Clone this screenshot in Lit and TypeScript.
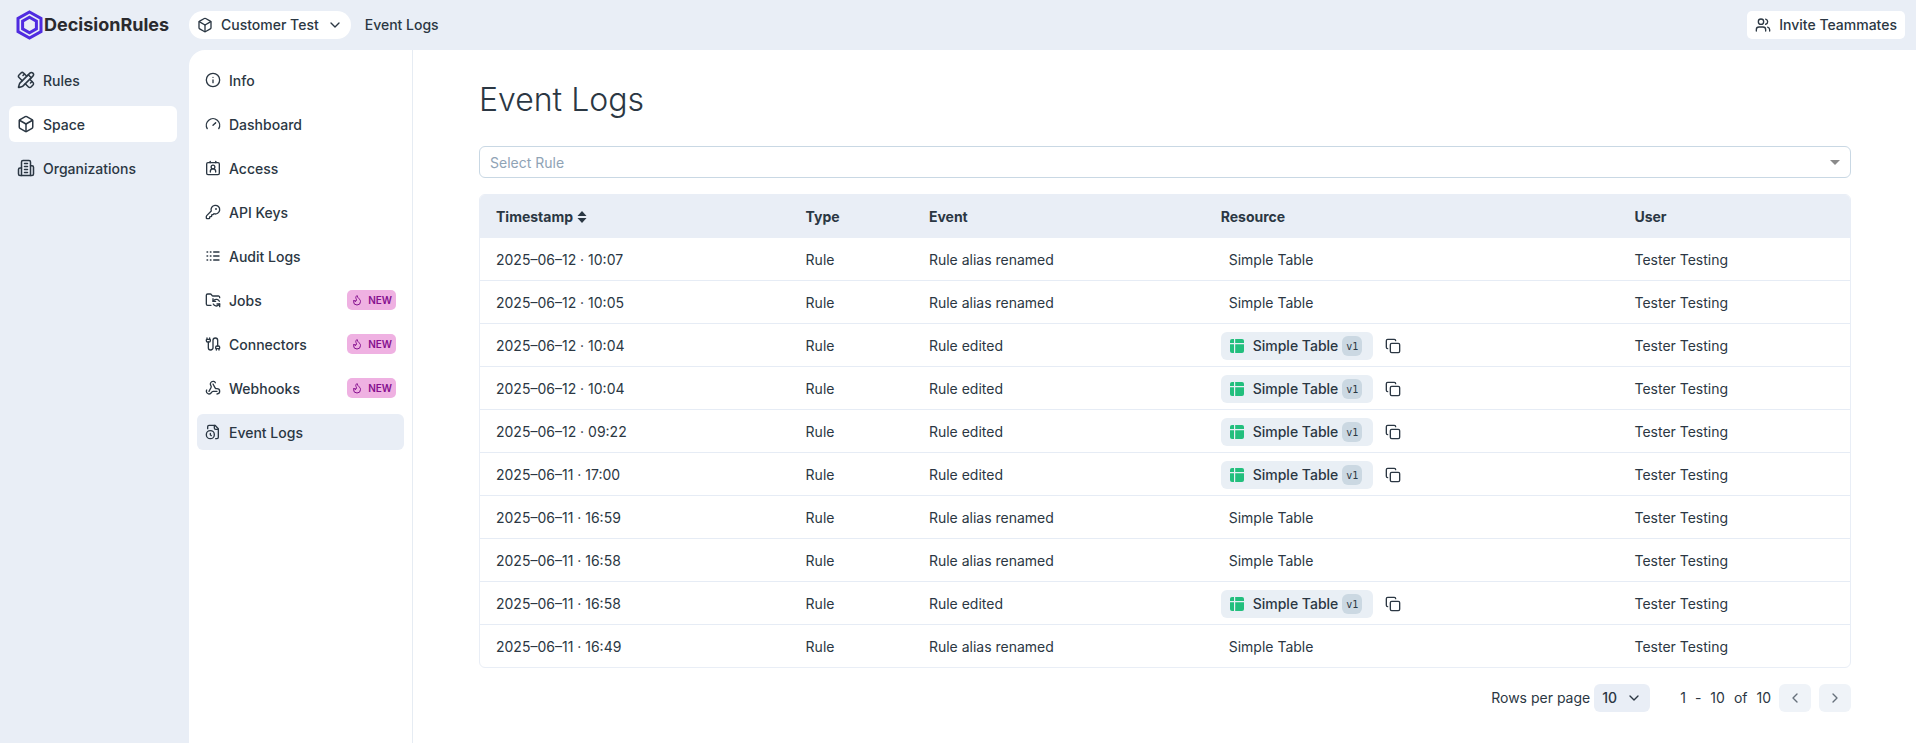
import { LitElement, html, css, svg, nothing } from "lit";
import { customElement, state } from "lit/decorators.js";
import { classMap } from "lit/directives/class-map.js";

const ICONS = {
  box: svg`<path d="M21 8a2 2 0 0 0-1-1.73l-7-4a2 2 0 0 0-2 0l-7 4A2 2 0 0 0 3 8v8a2 2 0 0 0 1 1.73l7 4a2 2 0 0 0 2 0l7-4A2 2 0 0 0 21 16Z"/><path d="m3.3 7 8.7 5 8.7-5"/><path d="M12 22V12"/>`,
  rules: svg`<path d="M13 7 8.7 2.7a2.41 2.41 0 0 0-3.4 0L2.7 5.3a2.41 2.41 0 0 0 0 3.4L7 13"/><path d="m8 6 2-2"/><path d="m18 16 2-2"/><path d="m17 11 4.3 4.3c.94.94.94 2.46 0 3.4l-2.6 2.6c-.94.94-2.46.94-3.4 0L11 17"/><path d="M21.174 6.812a1 1 0 0 0-3.986-3.987L3.842 16.174a2 2 0 0 0-.5.83l-1.321 4.352a.5.5 0 0 0 .623.622l4.353-1.32a2 2 0 0 0 .83-.497z"/><path d="m15 5 4 4"/>`,
  building: svg`<path d="M6 22V4a2 2 0 0 1 2-2h8a2 2 0 0 1 2 2v18Z"/><path d="M6 12H4a2 2 0 0 0-2 2v6a2 2 0 0 0 2 2h2"/><path d="M18 9h2a2 2 0 0 1 2 2v9a2 2 0 0 1-2 2h-2"/><path d="M10 6h4"/><path d="M10 10h4"/><path d="M10 14h4"/><path d="M10 18h4"/>`,
  info: svg`<circle cx="12" cy="12" r="10"/><path d="M12 16v-4"/><path d="M12 8h.01"/>`,
  gauge: svg`<path d="m12 14 4-4"/><path d="M3.34 19a10 10 0 1 1 17.32 0"/>`,
  access: svg`<path d="M16 2v2"/><path d="M8 2v2"/><rect x="2.5" y="4" width="19" height="18" rx="2"/><circle cx="12" cy="10.5" r="2.8"/><path d="M8 18v-1.2a4 3.5 0 0 1 8 0V18"/>`,
  key: svg`<path d="M2.586 17.414A2 2 0 0 0 2 18.828V21a1 1 0 0 0 1 1h3a1 1 0 0 0 1-1v-1a1 1 0 0 1 1-1h1a1 1 0 0 0 1-1v-1a1 1 0 0 1 1-1h.172a2 2 0 0 0 1.414-.586l.814-.814a6.5 6.5 0 1 0-4-4z"/><circle cx="16.5" cy="7.5" r=".5" fill="currentColor"/>`,
  logs: svg`<path d="M13 12h8"/><path d="M13 18h8"/><path d="M13 6h8"/><path d="M3 12h1"/><path d="M3 18h1"/><path d="M3 6h1"/><path d="M8 12h1"/><path d="M8 18h1"/><path d="M8 6h1"/>`,
  folderSync: svg`<path d="M9 20H4a2 2 0 0 1-2-2V5a2 2 0 0 1 2-2h3.9a2 2 0 0 1 1.69.9l.81 1.2a2 2 0 0 0 1.67.9H20a2 2 0 0 1 2 2v.5"/><path d="M12 10v4h4"/><path d="m12 14 1.535-1.605a5 5 0 0 1 8 1.5"/><path d="M22 22v-4h-4"/><path d="m22 18-1.535 1.605a5 5 0 0 1-8-1.5"/>`,
  cable: svg`<path d="M17 21v-2a1 1 0 0 1-1-1v-1a2 2 0 0 1 2-2h2a2 2 0 0 1 2 2v1a1 1 0 0 1-1 1v2"/><path d="M19 15V6.5a3.5 3.5 0 0 0-7 0v11a3.5 3.5 0 0 1-7 0V9"/><path d="M21 19h-4"/><path d="M3 5h4V3"/><path d="M7 5a1 1 0 0 1 1 1v1a2 2 0 0 1-2 2H4a2 2 0 0 1-2-2V6a1 1 0 0 1 1-1V3"/>`,
  webhook: svg`<path d="M18 16.98h-5.99c-1.1 0-1.95.94-2.48 1.9A4 4 0 0 1 2 17c.01-.7.2-1.4.57-2"/><path d="m6 17 3.13-5.78c.53-.97.1-2.18-.5-3.1a4 4 0 1 1 6.89-4.06"/><path d="m12 6 3.13 5.73C15.66 12.7 16.9 13 18 13a4 4 0 0 1 0 8"/>`,
  fileClock: svg`<path d="M16 22h2a2 2 0 0 0 2-2V7l-5-5H6a2 2 0 0 0-2 2v3"/><path d="M14 2v4a2 2 0 0 0 2 2h4"/><circle cx="8" cy="16" r="6"/><path d="M9.5 17.5 8 16.25V14"/>`,
  flame: svg`<path d="M8.5 14.5A2.5 2.5 0 0 0 11 12c0-1.38-.5-2-1-3-1.072-2.143-.224-4.054 2-6 .5 2.5 2 4.9 4 6.5 2 1.6 3 3.5 3 5.5a7 7 0 1 1-14 0c0-1.153.433-2.294 1-3a2.5 2.5 0 0 0 2.5 2.5z"/>`,
  users: svg`<path d="M16 21v-2a4 4 0 0 0-4-4H6a4 4 0 0 0-4 4v2"/><circle cx="9" cy="7" r="4"/><path d="M22 21v-2a4 4 0 0 0-3-3.87"/><path d="M16 3.13a4 4 0 0 1 0 7.75"/>`,
  copy: svg`<rect x="8" y="8" width="14" height="14" rx="2"/><path d="M4 16c-1.1 0-2-.9-2-2V4c0-1.1.9-2 2-2h10c1.1 0 2 .9 2 2"/>`,
  down: svg`<path d="m6 9 6 6 6-6"/>`,
  left: svg`<path d="m15 18-6-6 6-6"/>`,
  right: svg`<path d="m9 18 6-6-6-6"/>`,
};
type IconName = keyof typeof ICONS;

const icon = (name: IconName, cls = "icon") =>
  html`<svg class=${cls} viewBox="0 0 24 24" aria-hidden="true">${ICONS[name]}</svg>`;

interface NavItem { label: string; icon: IconName; active?: boolean; isNew?: boolean; }

const MAIN_NAV: NavItem[] = [
  { label: "Rules", icon: "rules" },
  { label: "Space", icon: "box", active: true },
  { label: "Organizations", icon: "building" },
];

const SPACE_NAV: NavItem[] = [
  { label: "Info", icon: "info" },
  { label: "Dashboard", icon: "gauge" },
  { label: "Access", icon: "access" },
  { label: "API Keys", icon: "key" },
  { label: "Audit Logs", icon: "logs" },
  { label: "Jobs", icon: "folderSync", isNew: true },
  { label: "Connectors", icon: "cable", isNew: true },
  { label: "Webhooks", icon: "webhook", isNew: true },
  { label: "Event Logs", icon: "fileClock", active: true },
];

interface LogRow { time: string; event: string; version?: string; }

const RENAMED = "Rule alias renamed";
const EDITED = "Rule edited";
const ROWS: LogRow[] = [
  { time: "2025–06–12 · 10:07", event: RENAMED },
  { time: "2025–06–12 · 10:05", event: RENAMED },
  { time: "2025–06–12 · 10:04", event: EDITED, version: "v1" },
  { time: "2025–06–12 · 10:04", event: EDITED, version: "v1" },
  { time: "2025–06–12 · 09:22", event: EDITED, version: "v1" },
  { time: "2025–06–11 · 17:00", event: EDITED, version: "v1" },
  { time: "2025–06–11 · 16:59", event: RENAMED },
  { time: "2025–06–11 · 16:58", event: RENAMED },
  { time: "2025–06–11 · 16:58", event: EDITED, version: "v1" },
  { time: "2025–06–11 · 16:49", event: RENAMED },
];

@customElement("app-root")
export class AppRoot extends LitElement {
  @state() private ascending = false;

  static styles = css`
    :host {
      --surface: #e9eef6;
      --ink: #2b3743;
      display: flex;
      flex-direction: column;
      min-height: 100vh;
      background: var(--surface);
      color: var(--ink);
      font: 400 14px/20px Inter, "Liberation Sans", sans-serif;
    }
    * { box-sizing: border-box; }
    button, select { font: inherit; color: inherit; border: 0; margin: 0; cursor: pointer; }
    a { color: inherit; text-decoration: none; }
    svg { display: block; flex: none; }
    .icon, .icon-lg, .icon-sm {
      width: 16px;
      height: 16px;
      fill: none;
      stroke: currentColor;
      stroke-width: 2;
      stroke-linecap: round;
      stroke-linejoin: round;
    }
    .icon-lg { width: 18px; height: 18px; }
    .icon-sm { width: 12px; height: 12px; }

    header { display: flex; align-items: center; height: 50px; padding-right: 11px; font-weight: 500; }
    .brand {
      display: flex;
      align-items: center;
      gap: 1px;
      width: 189px;
      padding-left: 16px;
      font-size: 18px;
      font-weight: 700;
      color: #2a2a2e;
    }
    .brand svg { width: 27px; height: 30px; }
    .space-switch, .invite {
      display: flex;
      align-items: center;
      gap: 8px;
      height: 28px;
      padding: 0 8px;
      background: #fff;
      border-radius: 14px;
    }
    .invite { margin-left: auto; border-radius: 5px; }
    .crumb { padding-left: 14px; }

    .body { display: flex; flex: 1; }
    .main-nav { width: 189px; padding: 12px 12px 12px 9px; }
    .space-nav {
      width: 224px;
      padding: 12px 8px;
      background: #fff;
      border-right: 1px solid #e6ecf3;
      border-top-left-radius: 16px;
    }
    .nav-list { display: flex; flex-direction: column; gap: 8px; margin: 0; padding: 0; list-style: none; }
    .nav-link {
      display: flex;
      align-items: center;
      gap: 8px;
      height: 36px;
      padding: 0 8px;
      border-radius: 6px;
      font-weight: 500;
    }
    .label { padding-top: 2px; }
    .main-nav .active { background: #fff; }
    .space-nav .active { background: var(--surface); }
    .new {
      display: flex;
      align-items: center;
      gap: 5px;
      height: 20px;
      margin-left: auto;
      padding: 0 4px;
      border-radius: 5px;
      background: #efb1e2;
      color: #86108f;
      font-size: 10px;
      font-weight: 600;
    }

    main { flex: 1; min-width: 0; padding: 30px 65px 30px 66px; background: #fff; }
    h1 { margin: 0 0 26px; font-size: 32px; line-height: 40px; font-weight: 300; }

    .picker, .size { display: grid; align-items: center; }
    .picker > *, .size > * { grid-area: 1 / 1; }
    .picker svg, .size svg { justify-self: end; pointer-events: none; }
    .picker select {
      appearance: none;
      width: 100%;
      height: 32px;
      padding: 1px 28px 0 10px;
      border: 1px solid #c9d8e4;
      border-radius: 6px;
      background: #fff;
      color: #8fa3b5;
    }
    .picker svg { width: 10px; height: 5px; margin-right: 11px; fill: #8a8a8a; }

    .table-box { margin-top: 16px; border: 1px solid var(--surface); border-radius: 6px; overflow: hidden; }
    table { width: 100%; table-layout: fixed; border-collapse: separate; border-spacing: 0; }
    th, td { padding: 0 16px; text-align: left; vertical-align: middle; }
    th { height: 43px; background: var(--surface); font-weight: 700; }
    td { height: 43px; padding-top: 1px; border-bottom: 1px solid #e6ecf5; }
    tr:last-child td { height: 42px; border-bottom: 0; }
    .c-time { width: 22.6%; }
    .c-type { width: 9%; }
    .c-event { width: 21.3%; }
    .c-resource { width: 30.2%; }
    .sort { display: flex; align-items: center; gap: 4px; padding: 0; background: none; }
    .sort svg { width: 10px; height: 12px; fill: currentColor; }

    .plain { padding-left: 8px; }
    .resource { display: flex; align-items: center; gap: 12px; }
    .chip {
      display: flex;
      align-items: center;
      height: 28px;
      padding: 0 11px 0 8px;
      border-radius: 6px;
      background: #e9eff5;
      font-weight: 500;
    }
    .chip svg { width: 16px; height: 16px; margin-right: 8px; fill: #22bf7d; }
    .version {
      height: 20px;
      margin-left: 4px;
      padding: 0 4px;
      border-radius: 6px;
      background: #cbd8e2;
      font: 400 10px/21px "DejaVu Sans Mono", monospace;
    }
    .copy { padding: 0; background: none; }

    .pager { display: flex; justify-content: flex-end; align-items: center; gap: 8px; margin-top: 16px; }
    .per-page { display: flex; align-items: center; gap: 4px; margin-right: 22px; }
    .size select {
      appearance: none;
      width: 56px;
      height: 28px;
      padding: 0 8px;
      border-radius: 6px;
      background: var(--surface);
      font-weight: 500;
    }
    .size svg { margin-right: 8px; }
    .range { display: flex; gap: 9px; }
    .page-button {
      display: grid;
      place-items: center;
      width: 32px;
      height: 28px;
      padding: 0;
      border-radius: 6px;
      background: #eff3f8;
      color: #66707b;
    }
  `;

  private navList(items: NavItem[], iconClass: string) {
    return html`<ul class="nav-list">
      ${items.map((item) => html`<li>
        <a href="#" class=${classMap({ "nav-link": true, active: !!item.active })}>
          ${icon(item.icon, iconClass)}<span class="label">${item.label}</span>
          ${item.isNew ? html`<span class="new">${icon("flame", "icon-sm")}NEW</span>` : nothing}
        </a>
      </li>`)}
    </ul>`;
  }

  private resource(row: LogRow) {
    if (!row.version) return html`<div class="plain">Simple Table</div>`;
    return html`<div class="resource">
      <a class="chip" href="#">
        <svg viewBox="0 0 16 16" aria-hidden="true">
          <path d="M3 1h2v4H1V3a2 2 0 0 1 2-2Z"/><path d="M6.2 1H13a2 2 0 0 1 2 2v2H6.2Z"/>
          <path d="M1 6.2h4V15H3a2 2 0 0 1-2-2Z"/><path d="M6.2 6.2H15V13a2 2 0 0 1-2 2H6.2Z"/>
        </svg>
        <span>Simple Table</span><span class="version">${row.version}</span>
      </a>
      <button class="copy" aria-label="Copy">${icon("copy")}</button>
    </div>`;
  }

  render() {
    const rows = this.ascending ? [...ROWS].reverse() : ROWS;
    return html`
      <header>
        <a class="brand" href="#">
          <svg viewBox="0 0 27 30" fill="none" stroke="#4f2be0" aria-hidden="true">
            <path stroke-width="3" d="M13.5 2 25 8.5v13L13.5 28 2 21.5v-13Z"/>
            <path stroke-width="3" d="M13.5 7.3 20.4 11.2v7.6l-6.9 3.9-6.9-3.9v-7.6Z"/>
          </svg>
          <span>DecisionRules</span>
        </a>
        <button class="space-switch">${icon("box")}<span>Customer Test</span>${icon("down")}</button>
        <span class="crumb">Event Logs</span>
        <button class="invite">${icon("users")}<span>Invite Teammates</span></button>
      </header>
      <div class="body">
        <nav class="main-nav" aria-label="Main">${this.navList(MAIN_NAV, "icon-lg")}</nav>
        <nav class="space-nav" aria-label="Space">${this.navList(SPACE_NAV, "icon")}</nav>
        <main>
          <h1>Event Logs</h1>
          <div class="picker">
            <select aria-label="Select Rule"><option>Select Rule</option></select>
            <svg viewBox="0 0 10 5" aria-hidden="true"><path d="M0 0h10L5 5Z"/></svg>
          </div>
          <div class="table-box">
            <table>
              <thead>
                <tr>
                  <th class="c-time">
                    <button class="sort" @click=${() => (this.ascending = !this.ascending)}>
                      Timestamp
                      <svg viewBox="0 0 10 12" aria-hidden="true"><path d="M5 0 9.5 5H.5Z"/><path d="M.5 7h9L5 12Z"/></svg>
                    </button>
                  </th>
                  <th class="c-type">Type</th>
                  <th class="c-event">Event</th>
                  <th class="c-resource">Resource</th>
                  <th>User</th>
                </tr>
              </thead>
              <tbody>
                ${rows.map((row) => html`<tr>
                  <td>${row.time}</td>
                  <td>Rule</td>
                  <td>${row.event}</td>
                  <td>${this.resource(row)}</td>
                  <td>Tester Testing</td>
                </tr>`)}
              </tbody>
            </table>
          </div>
          <div class="pager">
            <div class="per-page">
              <label for="size">Rows per page</label>
              <div class="size">
                <select id="size"><option>10</option></select>
                ${icon("down")}
              </div>
            </div>
            <div class="range"><span>1</span><span>-</span><span>10</span><span>of</span><span>10</span></div>
            <button class="page-button" aria-label="Previous page">${icon("left")}</button>
            <button class="page-button" aria-label="Next page">${icon("right")}</button>
          </div>
        </main>
      </div>
    `;
  }
}
